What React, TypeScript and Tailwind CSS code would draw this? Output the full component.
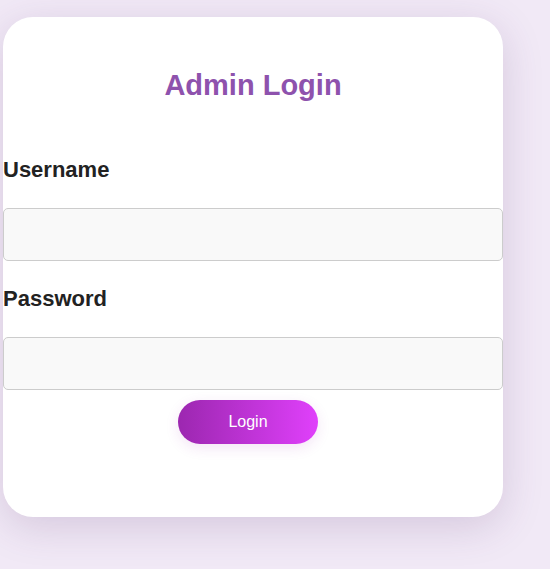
export default function App() {
  return (
    <div
      className="min-h-[569px] w-full bg-[#f1e9f6] pt-[17px] pl-[3px]"
      style={{ fontFamily: '"Liberation Sans", Arial, sans-serif' }}
    >
      {/* Login card */}
      <div className="w-[500px] h-[500px] rounded-[30px] bg-white shadow-[0_10px_40px_rgba(90,50,110,0.18)] pt-[51px]">
        <h2 className="text-center text-[29px] leading-[34px] font-bold text-[#8e52ad]">
          Admin Login
        </h2>

        <form className="mt-[55px]" onSubmit={(e) => e.preventDefault()}>
          <label className="block text-[22px] leading-[26px] font-bold text-[#222] mb-[25px]">
            Username
          </label>
          <input
            type="text"
            className="block w-full h-[53px] rounded-[5px] border border-[#ccc] bg-[#f9f9f9] px-3 outline-none mb-[25px]"
          />

          <label className="block text-[22px] leading-[26px] font-bold text-[#222] mb-[25px]">
            Password
          </label>
          <input
            type="password"
            className="block w-full h-[53px] rounded-[5px] border border-[#ccc] bg-[#f9f9f9] px-3 outline-none"
          />

          <div className="flex justify-center pr-[10px] mt-[10px]">
            <button
              type="submit"
              className="w-[140px] h-[44px] rounded-full bg-gradient-to-r from-[#9c27b0] to-[#e040fb] text-white text-[16px] shadow-[0_4px_14px_rgba(156,39,176,0.12)]"
            >
              Login
            </button>
          </div>
        </form>
      </div>
    </div>
  );
}
